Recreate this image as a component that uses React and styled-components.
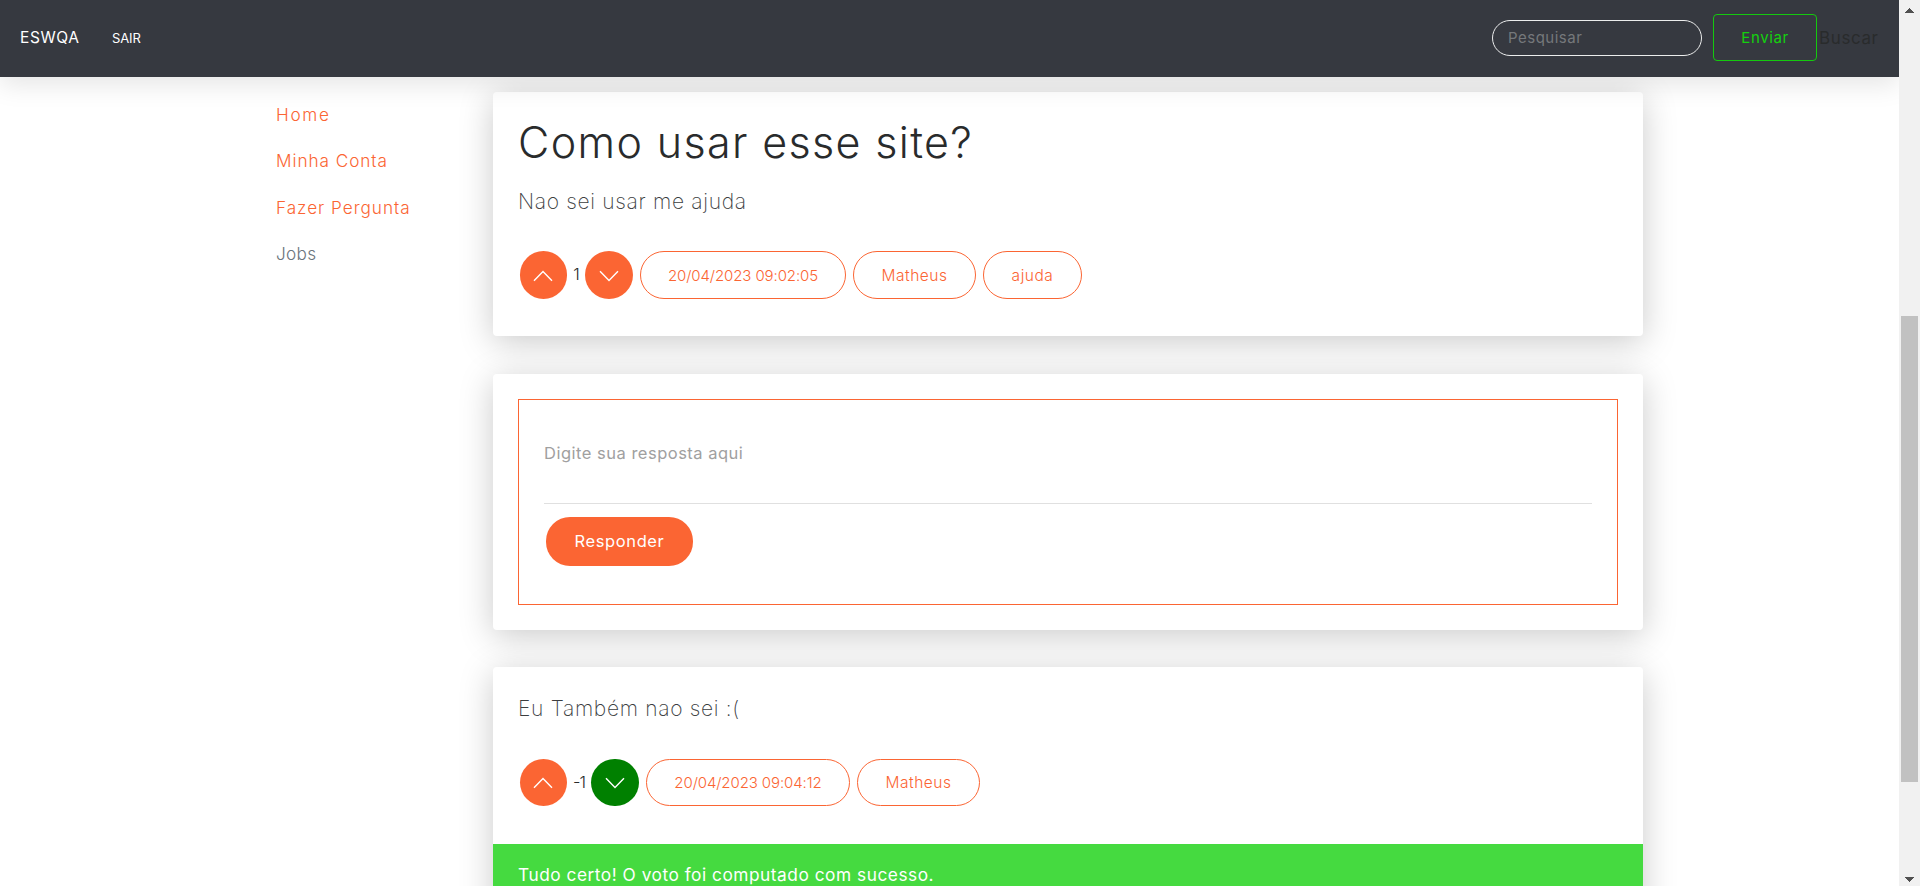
import React from "react";
import styled, { createGlobalStyle } from "styled-components";

const GlobalStyle = createGlobalStyle`
  *, *::before, *::after { box-sizing: border-box; }
  body {
    margin: 0;
    background: #fff;
    color: #292b2c;
    font-family: Inter, "Open Sans", sans-serif;
    overflow: hidden;
  }
`;

const orange = "#fb6533";

const Page = styled.div`
  display: flex;
  height: 886px;
  overflow: hidden;
`;

const Viewport = styled.div`
  flex: 1;
  min-width: 0;
  overflow: hidden;
`;

/* Navigation bar */
const Navbar = styled.nav`
  position: relative;
  z-index: 2;
  display: flex;
  align-items: center;
  height: 77px;
  padding: 0 21px 2px 20px;
  background: #363940;
  box-shadow: 0 8px 24px rgba(0, 0, 0, 0.1);
`;

const Brand = styled.a`
  width: 92px;
  color: #fff;
  font-size: 15.5px;
  letter-spacing: 0.6px;
`;

const NavLink = styled.a`
  color: #fff;
  font-size: 13px;
  letter-spacing: -0.1px;
`;

const SearchForm = styled.form`
  display: flex;
  align-items: center;
  margin-left: auto;
`;

const SearchInput = styled.input`
  width: 210px;
  height: 36px;
  margin: 1px 11px 0 0;
  padding: 0 14px 1px 15px;
  border: 1px solid #eceded;
  border-radius: 18px;
  outline: none;
  background: transparent;
  font-family: inherit;
  font-size: 15px;
  letter-spacing: 0.5px;
  &::placeholder { color: #75787b; opacity: 1; font-weight: 400; }
`;

const SearchButton = styled.button`
  width: 104px;
  height: 47px;
  padding: 0;
  border: 1px solid #14c90e;
  border-radius: 4px;
  background: transparent;
  color: #14d10e;
  font-family: inherit;
  font-size: 15px;
  letter-spacing: 0.6px;
`;

const SearchLabel = styled.span`
  width: 61px;
  padding-left: 2px;
  color: #292b2c;
  font-size: 17px;
  font-weight: 400;
  letter-spacing: 0.6px;
  white-space: nowrap;
`;

/* Content */
const Content = styled.div`
  display: flex;
  padding: 15px 0 0 276px;
`;

const Sidebar = styled.aside`
  display: flex;
  flex-direction: column;
  width: 217px;
`;

const SideLink = styled.a`
  height: 46.33px;
  line-height: 46.33px;
  color: ${(p) => (p.$muted ? "#6c757d" : orange)};
  font-size: 17.2px;
  font-weight: 300;
  letter-spacing: ${(p) => p.$spacing}px;
`;

const Main = styled.main`
  display: flex;
  flex-direction: column;
  width: 1150px;
`;

const Card = styled.section`
  margin-bottom: ${(p) => p.$gap || 0}px;
  padding: 25px 25px ${(p) => p.$bottom}px;
  border-radius: 4px;
  background: #fff;
  box-shadow: 0 6px 34px rgba(0, 0, 0, 0.21);
`;

const Title = styled.h1`
  margin: 0 0 17px;
  font-size: 43px;
  font-weight: 300;
  line-height: 51px;
  letter-spacing: 1.36px;
`;

const Text = styled.p`
  margin: 0 0 ${(p) => p.$after}px;
  padding-top: 1px;
  color: #3c3e3f;
  font-size: 21px;
  font-weight: 200;
  line-height: 32px;
  letter-spacing: 0.68px;
`;

const Meta = styled.div`
  display: flex;
  height: ${(p) => p.$height}px;
  padding-left: 2px;
`;

const VoteButton = styled.button`
  display: flex;
  align-items: center;
  justify-content: center;
  width: ${(p) => p.$width}px;
  height: 100%;
  padding: 1px 1px 0 0;
  border: 0;
  border-radius: 24px;
  background: ${(p) => (p.$voted ? "#008000" : orange)};
`;

const VoteCount = styled.span`
  display: flex;
  align-items: center;
  justify-content: center;
  width: ${(p) => p.$width}px;
  padding-bottom: 2px;
  font-size: 16.5px;
  font-weight: 300;
  letter-spacing: -1px;
`;

const Tag = styled.span`
  display: flex;
  align-items: center;
  justify-content: center;
  width: ${(p) => p.$width}px;
  margin-left: 7px;
  border: 1px solid ${orange};
  border-radius: 24px;
  color: ${orange};
  font-size: ${(p) => (p.$date ? 15 : 15.5)}px;
  font-weight: 300;
  letter-spacing: ${(p) => (p.$date ? -0.1 : 0.55)}px;
  white-space: nowrap;
`;

const AnswerForm = styled.form`
  display: flex;
  flex-direction: column;
  align-items: flex-start;
  height: 206px;
  padding: 25px;
  border: 1px solid ${orange};
`;

const AnswerField = styled.div`
  width: 100%;
  height: 79px;
  padding-top: 16px;
  border-bottom: 1px solid #e0e0e0;
  color: #a0a0a0;
  font-size: 16.5px;
  line-height: 24px;
  letter-spacing: 0.5px;
`;

const AnswerButton = styled.button`
  width: 147px;
  height: 49px;
  margin: 13px 0 0 2px;
  padding: 0 0 1px;
  border: 0;
  border-radius: 24px;
  background: ${orange};
  color: #fff;
  font-family: inherit;
  font-size: 16.5px;
  letter-spacing: 0.6px;
`;

const Alert = styled.div`
  height: 75px;
  margin: 38px -25px 0;
  padding: 18px 25px;
  background: #45da40;
  color: #fff;
  font-size: 17.3px;
  line-height: 26px;
  letter-spacing: 0.52px;
`;

/* Scrollbar */
const Scrollbar = styled.div`
  display: flex;
  flex-direction: column;
  align-items: center;
  justify-content: space-between;
  width: 21px;
  padding: 8px 1px 4px 0;
  background: #f1f1f1;
`;

const Thumb = styled.div`
  width: 17px;
  height: 466px;
  margin-top: 207px;
  background: #c1c1c1;
`;

const Arrow = ({ down }) => (
  <svg width="10" height="5" viewBox="0 0 10 5" shapeRendering="crispEdges">
    <path d={down ? "M0 0H10L5 5Z" : "M0 5H10L5 0Z"} fill="#505050" />
  </svg>
);

const Chevron = ({ down }) => (
  <svg width="20" height="12" viewBox="0 0 20 12" fill="none" stroke="#fff" strokeWidth="1.4">
    <path d={down ? "M1 1.2L10 10.4L19 1.2" : "M1 10.8L10 1.6L19 10.8"} />
  </svg>
);

const Votes = ({ count, countWidth, voted }) => (
  <>
    <VoteButton $width={47}>
      <Chevron />
    </VoteButton>
    <VoteCount $width={countWidth}>{count}</VoteCount>
    <VoteButton $width={48} $voted={voted}>
      <Chevron down />
    </VoteButton>
  </>
);

export default function App() {
  return (
    <Page>
      <GlobalStyle />
      <Viewport>
        <Navbar>
          <Brand>ESWQA</Brand>
          <NavLink>SAIR</NavLink>
          <SearchForm>
            <SearchInput placeholder="Pesquisar" />
            <SearchButton type="button">Enviar</SearchButton>
            <SearchLabel>Buscar</SearchLabel>
          </SearchForm>
        </Navbar>
        <Content>
          <Sidebar>
            <SideLink $spacing={1.7}>Home</SideLink>
            <SideLink $spacing={0.95}>Minha Conta</SideLink>
            <SideLink $spacing={0.97}>Fazer Pergunta</SideLink>
            <SideLink $muted $spacing={0.3}>Jobs</SideLink>
          </Sidebar>
          <Main>
            <Card $bottom={37} $gap={38}>
              <Title>Como usar esse site?</Title>
              <Text $after={33}>Nao sei usar me ajuda</Text>
              <Meta $height={48}>
                <Votes count="1" countWidth={18} />
                <Tag $date $width={206}>20/04/2023 09:02:05</Tag>
                <Tag $width={123}>Matheus</Tag>
                <Tag $width={99}>ajuda</Tag>
              </Meta>
            </Card>
            <Card $bottom={25} $gap={37}>
              <AnswerForm>
                <AnswerField>Digite sua resposta aqui</AnswerField>
                <AnswerButton type="button">Responder</AnswerButton>
              </AnswerForm>
            </Card>
            <Card $bottom={0}>
              <Text $after={34}>Eu Também nao sei :(</Text>
              <Meta $height={47}>
                <Votes count="-1" countWidth={24} voted />
                <Tag $date $width={204}>20/04/2023 09:04:12</Tag>
                <Tag $width={123}>Matheus</Tag>
              </Meta>
              <Alert>Tudo certo! O voto foi computado com sucesso.</Alert>
            </Card>
          </Main>
        </Content>
      </Viewport>
      <Scrollbar>
        <Arrow />
        <Thumb />
        <Arrow down />
      </Scrollbar>
    </Page>
  );
}
